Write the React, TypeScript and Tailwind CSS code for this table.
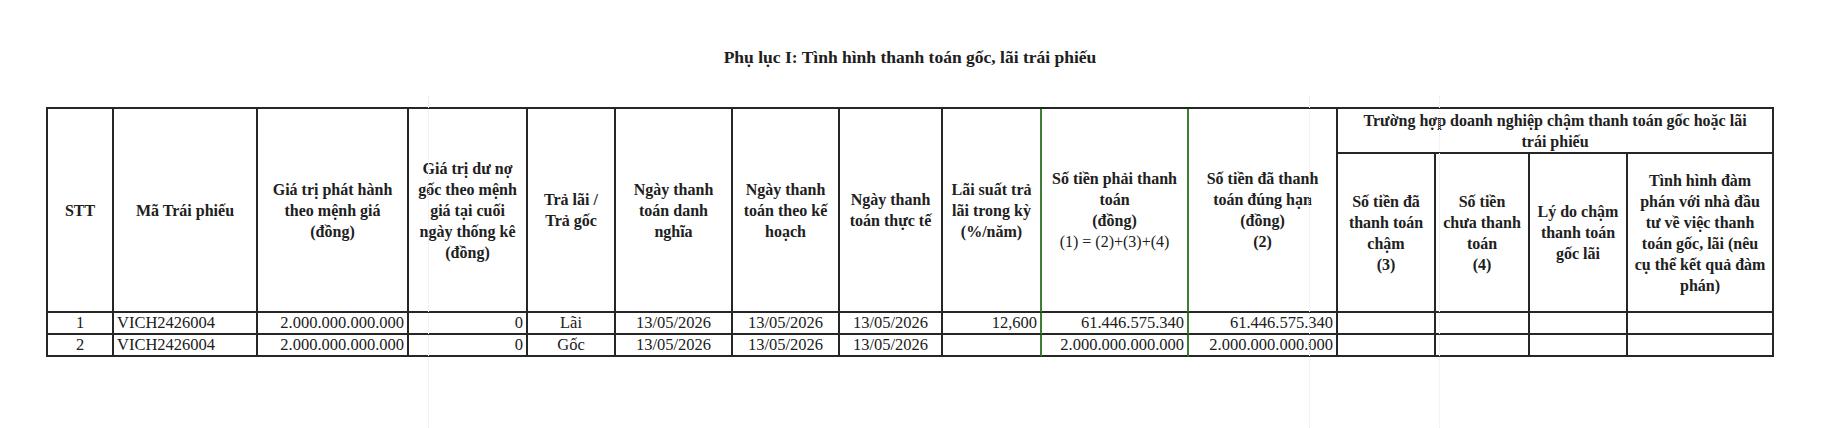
import React from "react";

const font = { fontFamily: '"Liberation Serif", "Times New Roman", serif' };

const widths = [66, 144, 151, 119, 88, 117, 107, 103, 99, 147, 149, 98, 94, 98, 146];

const hb = "border-r-2 border-b-2 border-[#262626] text-center align-middle font-bold text-[16px] leading-[21px] whitespace-nowrap p-0";
const hg = "border-r-2 border-b-2 border-r-[#3f7d35] border-b-[#262626] text-center align-middle font-bold text-[16px] leading-[21px] whitespace-nowrap p-0";
const db = "border-r-2 border-b-2 border-[#262626] align-middle text-[16.5px] leading-[18px] whitespace-nowrap py-0 px-[3px]";
const dg = "border-r-2 border-b-2 border-r-[#3f7d35] border-b-[#262626] align-middle text-[16.5px] leading-[18px] whitespace-nowrap py-0 px-[3px]";

function Lines({ lines }: { lines: React.ReactNode[] }) {
  return (
    <>
      {lines.map((l, i) => (
        <div key={i}>{l}</div>
      ))}
    </>
  );
}

type Row = {
  stt: string;
  code: string;
  face: string;
  out: string;
  kind: string;
  d1: string;
  d2: string;
  d3: string;
  rate: string;
  due: string;
  paid: string;
};

const rows: Row[] = [
  {
    stt: "1",
    code: "VICH2426004",
    face: "2.000.000.000.000",
    out: "0",
    kind: "Lãi",
    d1: "13/05/2026",
    d2: "13/05/2026",
    d3: "13/05/2026",
    rate: "12,600",
    due: "61.446.575.340",
    paid: "61.446.575.340",
  },
  {
    stt: "2",
    code: "VICH2426004",
    face: "2.000.000.000.000",
    out: "0",
    kind: "Gốc",
    d1: "13/05/2026",
    d2: "13/05/2026",
    d3: "13/05/2026",
    rate: "",
    due: "2.000.000.000.000",
    paid: "2.000.000.000.000",
  },
];

export default function App() {
  return (
    <div className="relative w-[1830px] h-[428px] bg-white text-[#202020] overflow-hidden" style={font}>
      <div className="pl-[46px] pt-[45px]">
        <div className="w-[1728px] text-center font-bold text-[17.5px] leading-[24px]">
          Phụ lục I: Tình hình thanh toán gốc, lãi trái phiếu
        </div>
        <table
          className="mt-[38px] w-[1728px] table-fixed border-separate border-spacing-0 border-t-2 border-l-2 border-[#262626]"
        >
          <colgroup>
            {widths.map((w, i) => (
              <col key={i} style={{ width: w }} />
            ))}
          </colgroup>
          <tbody>
            <tr className="h-[45px]">
              <td rowSpan={2} className={hb}>STT</td>
              <td rowSpan={2} className={hb}>Mã Trái phiếu</td>
              <td rowSpan={2} className={hb}>
                <Lines lines={["Giá trị phát hành", "theo mệnh giá", "(đồng)"]} />
              </td>
              <td rowSpan={2} className={hb}>
                <Lines lines={["Giá trị dư nợ", "gốc theo mệnh", "giá tại cuối", "ngày thống kê", "(đồng)"]} />
              </td>
              <td rowSpan={2} className={hb}>
                <Lines lines={["Trả lãi /", "Trả gốc"]} />
              </td>
              <td rowSpan={2} className={hb}>
                <Lines lines={["Ngày thanh", "toán danh", "nghĩa"]} />
              </td>
              <td rowSpan={2} className={hb}>
                <Lines lines={["Ngày thanh", "toán theo kế", "hoạch"]} />
              </td>
              <td rowSpan={2} className={hb}>
                <Lines lines={["Ngày thanh", "toán thực tế"]} />
              </td>
              <td rowSpan={2} className={hg}>
                <Lines lines={["Lãi suất trả", "lãi trong kỳ", "(%/năm)"]} />
              </td>
              <td rowSpan={2} className={hg}>
                <Lines
                  lines={[
                    "Số tiền phải thanh",
                    "toán",
                    "(đồng)",
                    <span className="font-normal">(1) = (2)+(3)+(4)</span>,
                  ]}
                />
              </td>
              <td rowSpan={2} className={hb}>
                <Lines lines={["Số tiền đã thanh", "toán đúng hạn", "(đồng)", "(2)"]} />
              </td>
              <td colSpan={4} className={hb}>
                <Lines lines={["Trường hợp doanh nghiệp chậm thanh toán gốc hoặc lãi", "trái phiếu"]} />
              </td>
            </tr>
            <tr className="h-[159px]">
              <td className={hb}>
                <Lines lines={["Số tiền đã", "thanh toán", "chậm", "(3)"]} />
              </td>
              <td className={hb}>
                <Lines lines={["Số tiền", "chưa thanh", "toán", "(4)"]} />
              </td>
              <td className={hb}>
                <Lines lines={["Lý do chậm", "thanh toán", "gốc lãi"]} />
              </td>
              <td className={hb}>
                <Lines
                  lines={[
                    "Tình hình đàm",
                    "phán với nhà đầu",
                    "tư về việc thanh",
                    "toán gốc, lãi (nêu",
                    "cụ thể kết quả đàm",
                    "phán)",
                  ]}
                />
              </td>
            </tr>
            {rows.map((r) => (
              <tr key={r.stt} className="h-[22px]">
                <td className={`${db} text-center`}>{r.stt}</td>
                <td className={`${db} text-left`}>{r.code}</td>
                <td className={`${db} text-right`}>{r.face}</td>
                <td className={`${db} text-right`}>{r.out}</td>
                <td className={`${db} text-center`}>{r.kind}</td>
                <td className={`${db} text-center`}>{r.d1}</td>
                <td className={`${db} text-center`}>{r.d2}</td>
                <td className={`${db} text-center`}>{r.d3}</td>
                <td className={`${dg} text-right`}>{r.rate}</td>
                <td className={`${dg} text-right`}>{r.due}</td>
                <td className={`${db} text-right`}>{r.paid}</td>
                <td className={db}></td>
                <td className={db}></td>
                <td className={db}></td>
                <td className={db}></td>
              </tr>
            ))}
          </tbody>
        </table>
      </div>
      <div className="absolute left-[428px] top-[96px] h-[332px] border-l border-dotted border-[#e4e4ec]" />
      <div className="absolute left-[1309px] top-[96px] h-[332px] border-l border-dotted border-[#e4e4ec]" />
      <div className="absolute left-[1439px] top-[96px] h-[332px] border-l border-dotted border-[#e8e8ee]" />
    </div>
  );
}
